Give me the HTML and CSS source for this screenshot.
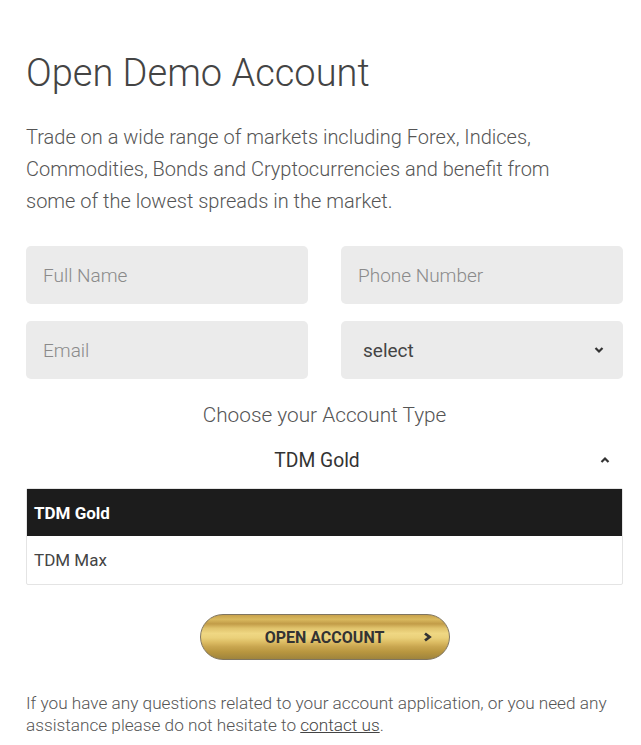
FILE: index.html
```html
<!DOCTYPE html>
<html>
<head>
<meta charset="utf-8">
<link rel="stylesheet" href="styles.css">
</head>
<body>
<div class="page">
  <h1 class="title">Open Demo Account</h1>
  <p class="intro">Trade on a wide range of markets including Forex, Indices, Commodities, Bonds and Cryptocurrencies and benefit from some of the lowest spreads in the market.</p>
  <div class="form-grid">
    <div class="field"><span class="ph">Full Name</span></div>
    <div class="field"><span class="ph">Phone Number</span></div>
    <div class="field"><span class="ph">Email</span></div>
    <div class="field select"><span class="sel">select</span>
      <svg class="chev" width="12" height="8" viewBox="0 0 12 8"><path d="M2.5 2 L6 5.5 L9.5 2" fill="none" stroke="#333" stroke-width="2.2"/></svg>
    </div>
  </div>
  <div class="choose">Choose your Account Type</div>
  <div class="acct-head">
    <span class="acct-label">TDM Gold</span>
    <svg class="chev-up" width="12" height="8" viewBox="0 0 12 8"><path d="M2.5 6 L6 2.5 L9.5 6" fill="none" stroke="#333" stroke-width="2.2"/></svg>
  </div>
  <div class="acct-list">
    <div class="opt active">TDM Gold</div>
    <div class="opt">TDM Max</div>
  </div>
  <div class="btn-wrap">
    <div class="btn"><span class="btn-text">OPEN ACCOUNT</span>
      <svg class="btn-arrow" width="10" height="10" viewBox="0 0 10 10"><path d="M2 1.5 L6.5 5 L2 8.5" fill="none" stroke="#333" stroke-width="2.8"/></svg>
    </div>
  </div>
  <p class="note">If you have any questions related to your account application, or you need any assistance please do not hesitate to <a class="link" href="#">contact us</a>.</p>
</div>
</body>
</html>
```
FILE: styles.css
```css
* { box-sizing: border-box; }
html, body { margin: 0; padding: 0; background: #fff; }
body { font-family: Roboto, "Noto Sans", sans-serif; color: #555; }
.page { padding: 47px 18px 0 26px; width: 641px; }
.title {
  margin: 0;
  font-size: 38px;
  font-weight: 300;
  color: #444;
  line-height: 52px;
}
.intro {
  margin: 22px 0 0;
  max-width: 570px;
  font-size: 20px;
  font-weight: 300;
  line-height: 32px;
  color: #555;
}
.form-grid {
  margin-top: 29px;
  display: grid;
  grid-template-columns: 282px 282px;
  column-gap: 33px;
  row-gap: 17px;
}
.field {
  height: 58px;
  background: #ebebeb;
  border-radius: 5px;
  display: flex;
  align-items: center;
  padding: 0 17px;
  font-size: 19px;
  font-weight: 300;
}
.ph { color: #8a8a8a; }
.select { justify-content: space-between; padding: 0 18px 0 22px; }
.sel { color: #444; font-weight: 400; }
.chev { display: block; }
.choose {
  margin-top: 22px;
  text-align: center;
  font-size: 20.8px;
  font-weight: 300;
  color: #555;
  line-height: 28px;
}
.acct-head {
  position: relative;
  margin-top: 16px;
  height: 30px;
  display: flex;
  align-items: center;
  justify-content: center;
}
.acct-label { font-size: 19.3px; color: #333; font-weight: 400; margin-left: -15px; }
.chev-up { position: absolute; right: 12px; top: 11px; }
.acct-list {
  margin-top: 13px;
  border: 1px solid #e4e4e4;
  border-radius: 2px;
}
.opt {
  height: 48px;
  display: flex;
  align-items: center;
  padding: 0 7px;
  font-size: 17px;
  color: #444;
}
.opt.active { background: #1c1c1c; color: #fff; font-weight: 700; height: 47px; }
.btn-wrap { display: flex; justify-content: center; margin-top: 29px; }
.btn {
  position: relative;
  width: 250px;
  height: 46px;
  border-radius: 23px;
  border: 1px solid #7f7560;
  background: linear-gradient(to bottom,
    #c8a24c 0%, #d9b95e 10%, #c29c48 20%, #e0c36c 30%, #efd783 42%,
    #ead07a 52%, #dcbc63 62%, #c9a650 72%, #b8963f 84%, #9f843d 100%);
  display: flex;
  align-items: center;
  justify-content: center;
}
.btn-text { font-size: 16px; font-weight: 700; color: #333; }
.btn-arrow { position: absolute; right: 16px; top: 17px; }
.note {
  margin: 32px 0 0;
  font-size: 17.2px;
  font-weight: 300;
  line-height: 22px;
  color: #555;
}
.link { color: #444; text-decoration: underline; }
```
